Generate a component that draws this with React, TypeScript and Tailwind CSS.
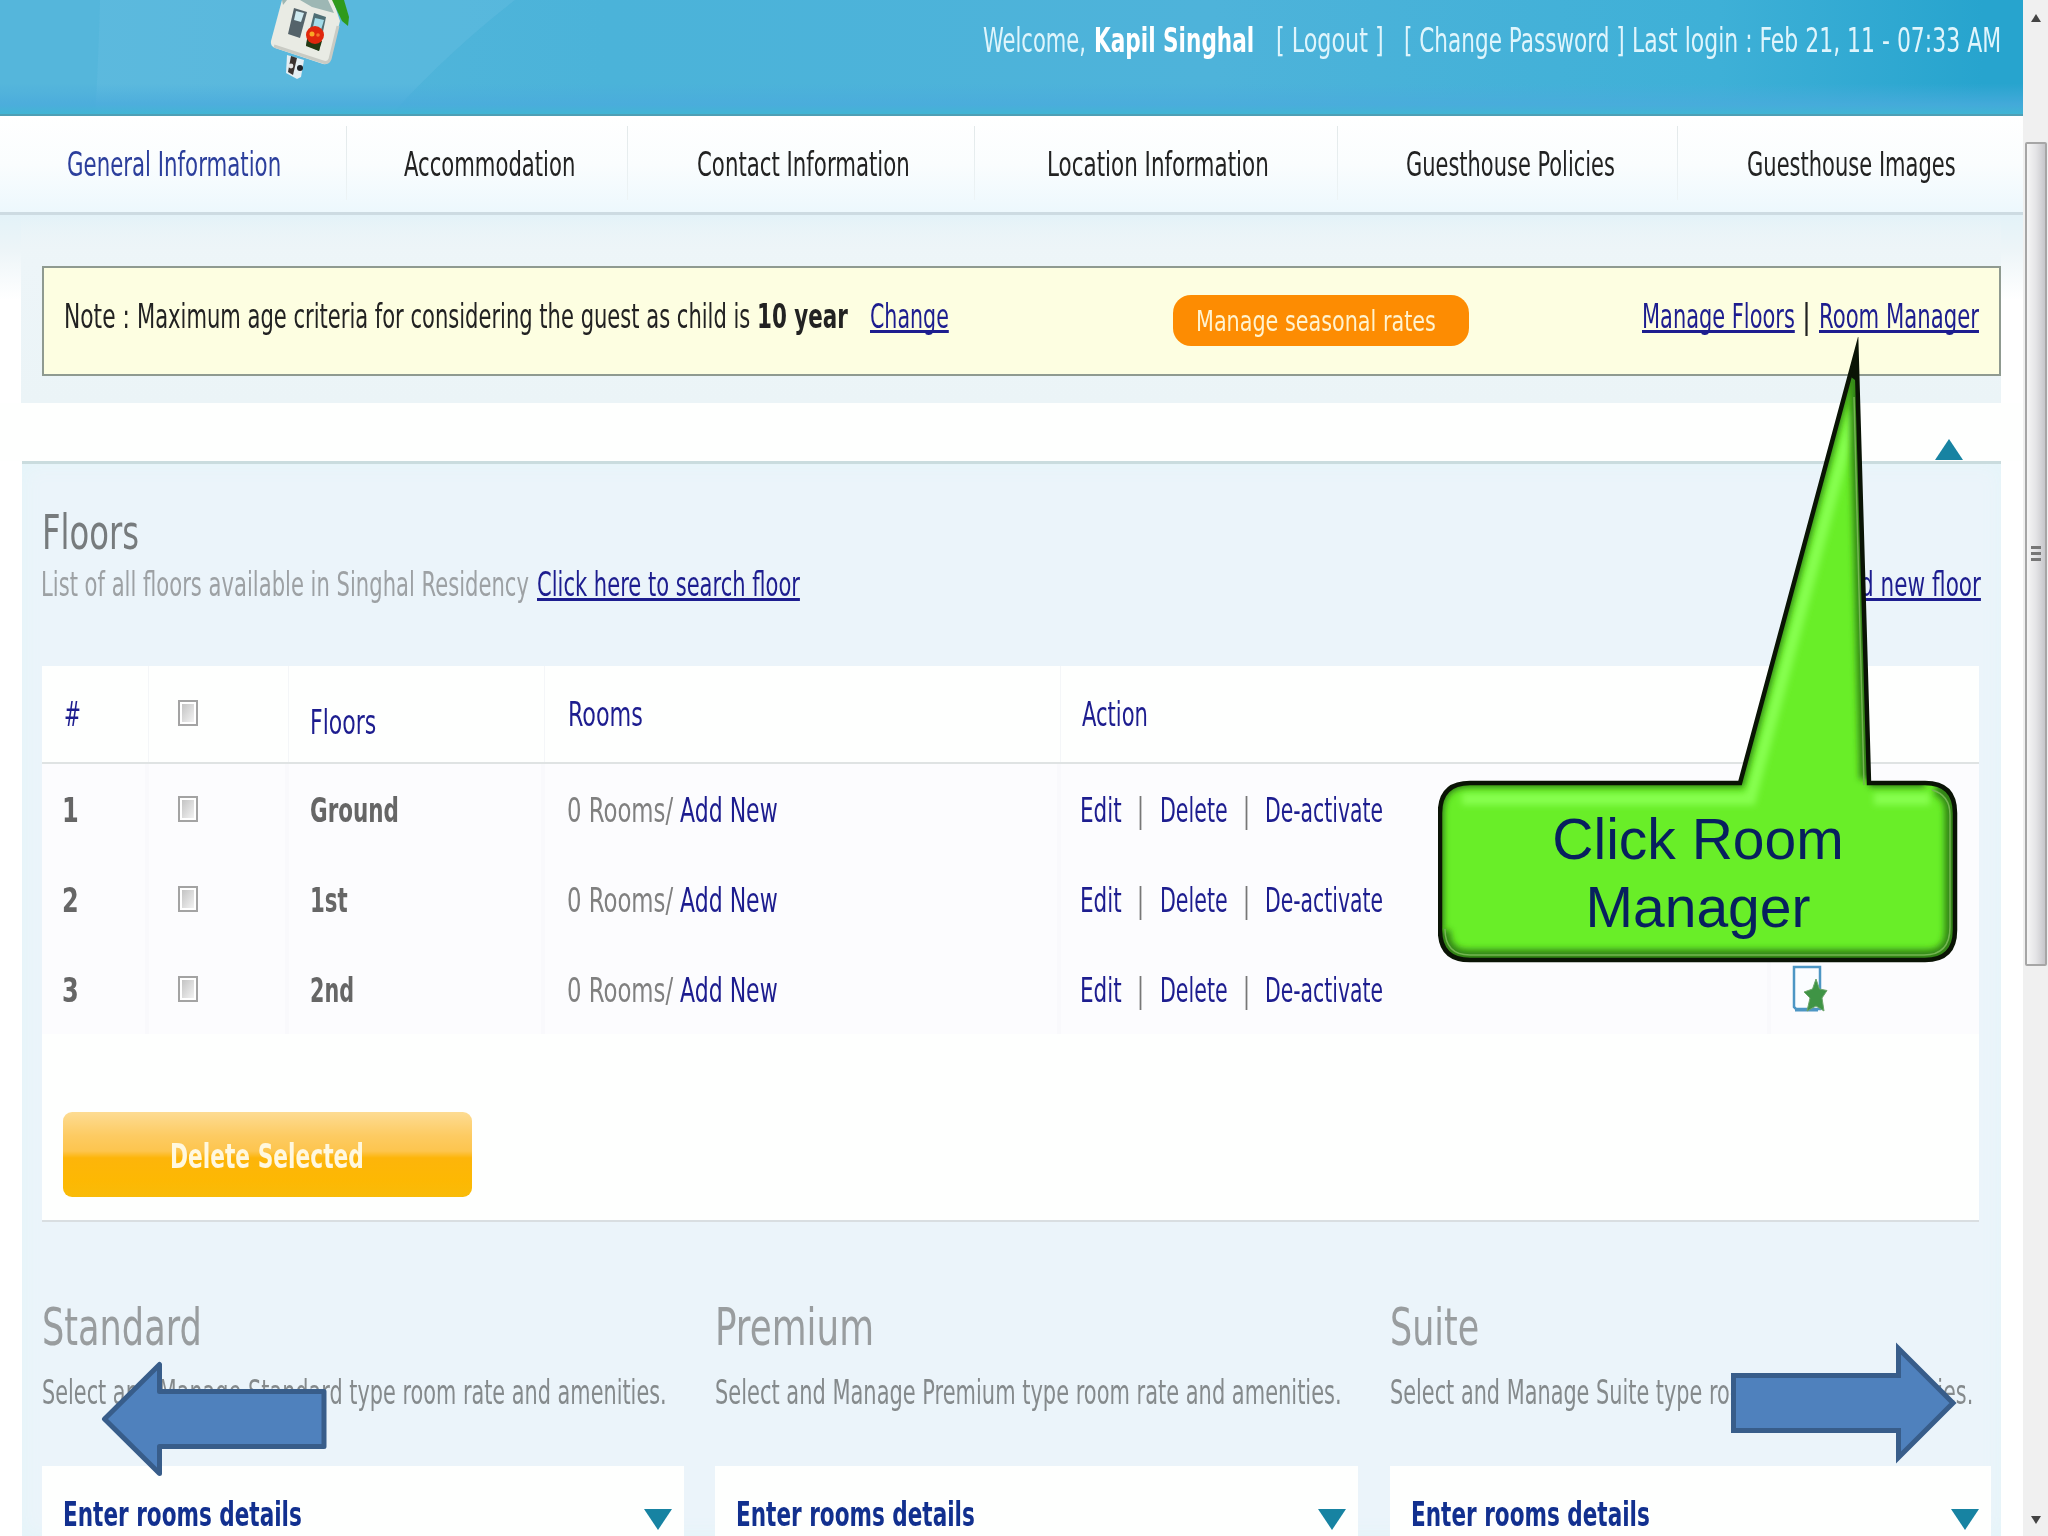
import { useLayoutEffect, useRef, useState, type ReactNode } from 'react';
import clsx from 'clsx';

interface FitTextProps {
  width: number;
  children: ReactNode;
  className?: string;
}

// Squeezes a single line of text horizontally so that it fills exactly `width` pixels
function FitText({ width, children, className }: FitTextProps) {
  const ref = useRef<HTMLSpanElement>(null);
  const [scale, setScale] = useState(1);

  useLayoutEffect(() => {
    if (ref.current && ref.current.offsetWidth > 0) {
      setScale(width / ref.current.offsetWidth);
    }
  }, [width]);

  return (
    <span className={clsx('block shrink-0', className)} style={{ width }}>
      <span
        ref={ref}
        className="inline-block origin-left whitespace-pre align-top"
        style={{ transform: `scaleX(${scale})` }}
      >
        {children}
      </span>
    </span>
  );
}

const linkClasses =
  'text-[#1d1d8f] [&>span]:underline [&>span]:decoration-[2.5px] [&>span]:underline-offset-[2px] [&>span]:[text-decoration-skip-ink:none]';

function Logo() {
  return (
    <svg width="90" height="84" viewBox="0 0 90 84" className="ml-[262px] shrink-0">
      <path d="M20 0 L9 41 Q8 46 13 48 L61 64 Q66 65 68 60 L78 21 L71 0 Z" fill="#e9ebe4" />
      <path d="M12 46 L61 62 Q66 64 68 59 L76 26" fill="none" stroke="#c9cbc4" strokeWidth="3" />
      <path d="M20 0 L25 0 L21 5 Z M38 0 L66 0 L72 13 L50 7 Z" fill="#9db7b4" />
      <path d="M70 0 L82 0 L87 17 L86 26 L80 21 Z" fill="#2f9a1c" />
      <path d="M32 8 L45 12 L38 38 L26 34 Z" fill="#55636a" />
      <path d="M34 11 L42 13 L39 22 L32 20 Z" fill="#cfeaf0" />
      <path d="M52 13 L64 17 L57 51 L44 45 Z" fill="#4f6f75" />
      <path d="M53 18 L62 20 L59 30 L51 27 Z" fill="#a3dbe8" />
      <path d="M45 39 L60 41 L57 51 L44 46 Z" fill="#233a13" />
      <ellipse cx="53" cy="35" rx="9" ry="9" fill="#e0270d" />
      <circle cx="50" cy="34" r="2.5" fill="#f9a825" />
      <circle cx="56" cy="35" r="1.8" fill="#f4772a" />
      <path d="M25 55 L42 60 L39 77 L35 79 L24 73 Z" fill="#e4eef3" />
      <path d="M29 56 L35 58 L31 75 L26 72 Z" fill="#3b3331" />
      <circle cx="38" cy="68" r="3" fill="#20242a" />
      <circle cx="29" cy="66" r="2.4" fill="#e5e5e5" />
    </svg>
  );
}

function Header() {
  return (
    <header className="relative flex h-[116px] items-start overflow-hidden border-b-2 border-[#4f9fb5] bg-[linear-gradient(90deg,#58b7dc_0%,#4bb3d9_30%,#4eb3da_60%,#3eb0d7_85%,#27a4ce_98%)]">
      <svg className="absolute inset-0" width="2023" height="116">
        <defs>
          <linearGradient id="base" x1="0" x2="0" y1="0" y2="1">
            <stop offset="0.72" stopColor="#4aabdc" stopOpacity="0" />
            <stop offset="0.9" stopColor="#4aabdc" stopOpacity="0.8" />
            <stop offset="1" stopColor="#3fb8d2" />
          </linearGradient>
        </defs>
        <path d="M0 0 H515 Q450 50 390 116 H0 Z" fill="#62bcdf" opacity="0.5" />
        <path d="M0 0 H100 Q98 70 95 116 H0 Z" fill="#49b1d8" opacity="0.35" />
        <rect width="2023" height="116" fill="url(#base)" />
      </svg>
      <div className="relative flex w-full items-start">
        <Logo />
        <div className="ml-auto flex pt-[21px] pr-[22px] text-[#dff5fc]">
          <FitText width={103}>Welcome,</FitText>
          <FitText width={160} className="ml-2 font-bold text-white">
            Kapil Singhal
          </FitText>
          <FitText width={108} className="ml-[22px]">
            [ Logout ]
          </FitText>
          <FitText width={221} className="ml-5">
            [ Change Password ]
          </FitText>
          <FitText width={369} className="ml-[7px]">
            Last login : Feb 21, 11 - 07:33 AM
          </FitText>
        </div>
      </div>
    </header>
  );
}

const tabs = [
  { label: 'General Information', width: 214, cell: 'w-[347px] pl-[67px] text-[#2c3f9c]' },
  { label: 'Accommodation', width: 171, cell: 'w-[281px] pl-[57px]' },
  { label: 'Contact Information', width: 213, cell: 'w-[347px] pl-[69px]' },
  { label: 'Location Information', width: 222, cell: 'w-[363px] pl-[72px]' },
  { label: 'Guesthouse Policies', width: 209, cell: 'w-[340px] pl-[68px]' },
  { label: 'Guesthouse Images', width: 209, cell: 'w-[345px] pl-[69px]' },
];

function NavTabs() {
  return (
    <nav className="flex h-[99px] border-b-3 border-[#cddbe2] bg-linear-to-b from-white via-[#fafdfe] to-[#edf8fd] text-[#222]">
      {tabs.map((tab, index) => (
        <div key={tab.label} className={clsx('flex justify-between pt-[29px]', tab.cell)}>
          <FitText width={tab.width}>{tab.label}</FitText>
          {index < tabs.length - 1 && (
            <span className="-mt-[19px] h-[74px] w-px bg-linear-to-b from-[#e3e9ea] to-[#edf4f6]" />
          )}
        </div>
      ))}
    </nav>
  );
}

function NoteBar() {
  return (
    <section className="h-[188px] bg-[linear-gradient(180deg,#e3f2f8_0px,#edf5f8_35px,#ffffff_85px)] pl-[21px]">
      <div className="h-[188px] w-[1980px] bg-[linear-gradient(180deg,#e6f3f900_0px,#edf5f8_45px,#ebf4f7_188px)] pt-[51px] pl-[21px]">
        <div className="flex h-[110px] w-[1959px] border-2 border-[#8f9a90] bg-[#fdfee1] text-[#222]">
          <FitText width={66} className="mt-[29px] ml-5">
            Note :
          </FitText>
          <FitText width={613} className="mt-[29px] ml-[7px]">
            Maximum age criteria for considering the guest as child is
          </FitText>
          <FitText width={91} className="mt-[29px] ml-[7px] font-bold">
            10 year
          </FitText>
          <FitText width={79} className={clsx('mt-[29px] ml-[22px]', linkClasses)}>
            Change
          </FitText>
          <button
            type="button"
            className="mt-[27px] ml-[224px] flex h-[51px] w-[296px] rounded-[18px] bg-[#fd8c02] pt-[6px] pl-[23px] text-[29px] text-[#fff3cf]"
          >
            <FitText width={240}>Manage seasonal rates</FitText>
          </button>
          <FitText width={153} className={clsx('mt-[29px] ml-[173px]', linkClasses)}>
            Manage Floors
          </FitText>
          <FitText width={9} className="mt-[29px] ml-[7px]">
            |
          </FitText>
          <FitText width={160} className={clsx('mt-[29px] ml-2', linkClasses)}>
            Room Manager
          </FitText>
        </div>
      </div>
    </section>
  );
}

function Checkbox() {
  return (
    <span className="block h-[26px] w-5 border-2 border-[#a3a3a3] bg-white p-0.5">
      <span className="block size-full bg-linear-to-br from-[#c4c4c4] to-[#f3f3f3]" />
    </span>
  );
}

function StarPageIcon() {
  return (
    <svg width="40" height="54" viewBox="0 0 40 54">
      <path d="M3 4 H29 V46 H5 L3 44 Z" fill="#fbfdff" stroke="#4d96c4" strokeWidth="2.5" />
      <path d="M4 47 H27" stroke="#4d96c4" strokeWidth="3" />
      <path
        d="M25 16 L28.5 26 L36 27.5 L31 35 L33 48 L25 43 L16 48 L19 35 L13 29 L21.5 26 Z"
        fill="#3f9445"
        stroke="#6da56b"
        strokeWidth="1"
      />
    </svg>
  );
}

const tableGrid = 'grid grid-cols-[107px_140px_256px_516px_710px_208px]';

const floors = [
  { name: 'Ground', width: 89 },
  { name: '1st', width: 38 },
  { name: '2nd', width: 44 },
];

function FloorsTable() {
  return (
    <div className="mt-[61px] ml-5 h-[556px] w-[1937px] border-b-2 border-[#d9dee1] bg-[#fefffe]">
      <div
        className={clsx(
          tableGrid,
          'h-[98px] border-b-2 border-[#dfe3e3] text-[#1d1d8f] *:border-r *:border-[#f4f6f8] *:last:border-r-0',
        )}
      >
        <div className="pt-[29px] pl-[22px]">
          <FitText width={17}>#</FitText>
        </div>
        <div className="pt-[34px] pl-[29px]">
          <Checkbox />
        </div>
        <div className="pt-[37px] pl-[21px]">
          <FitText width={66}>Floors</FitText>
        </div>
        <div className="pt-[29px] pl-[23px]">
          <FitText width={75}>Rooms</FitText>
        </div>
        <div className="pt-[29px] pl-[21px]">
          <FitText width={66}>Action</FitText>
        </div>
        <div />
      </div>

      {floors.map((floor, index) => (
        <div
          key={floor.name}
          className={clsx(
            tableGrid,
            'h-[90px] bg-[#fcfcfe] pt-[27px]',
            '*:-mt-[27px] *:h-[90px] *:border-r-4 *:border-[#f9f9fc] *:pt-[27px] *:last:border-r-0',
          )}
        >
          <div className="pl-5 font-bold text-[#666]">
            <FitText width={17}>{index + 1}</FitText>
          </div>
          <div className="pl-[29px]">
            <div className="pt-[5px]">
              <Checkbox />
            </div>
          </div>
          <div className="pl-[21px] font-bold text-[#666]">
            <FitText width={floor.width}>{floor.name}</FitText>
          </div>
          <div className="flex gap-[7px] pl-[22px]">
            <FitText width={106} className="text-[#808080]">
              0 Rooms/
            </FitText>
            <FitText width={98} className="text-[#1d1d8f]">
              Add New
            </FitText>
          </div>
          <div className="flex pl-[19px] text-[#1d1d8f]">
            <FitText width={42}>Edit</FitText>
            <FitText width={7} className="ml-[15px] text-[#777]">
              |
            </FitText>
            <FitText width={68} className="ml-4">
              Delete
            </FitText>
            <FitText width={7} className="ml-[15px] text-[#777]">
              |
            </FitText>
            <FitText width={118} className="ml-[15px]">
              De-activate
            </FitText>
          </div>
          <div className="pl-5">
            <div className="-mt-2">
              <StarPageIcon />
            </div>
          </div>
        </div>
      ))}

      <div className="h-[186px] bg-[#fefffe] pt-[78px] pl-[21px]">
        <button
          type="button"
          className="flex h-[85px] w-[409px] rounded-[9px] bg-[linear-gradient(180deg,#fddc93_0%,#fdcb62_28%,#fdc54e_46%,#fdb50a_54%,#fdb803_80%,#f9bb08_100%)] pt-[25px] pl-[107px] font-bold text-[#fff8df]"
        >
          <FitText width={194}>Delete Selected</FitText>
        </button>
      </div>
    </div>
  );
}

const categories = [
  { name: 'Standard', nameWidth: 160, descWidth: 625, card: 'w-[642px]' },
  { name: 'Premium', nameWidth: 159, descWidth: 627, card: 'w-[643px]' },
  { name: 'Suite', nameWidth: 89, descWidth: 583, card: 'w-[601px]' },
];

function RoomCategories() {
  return (
    <div className="ml-5 grid grid-cols-[673px_675px_601px] pt-[76px]">
      {categories.map((category) => (
        <div key={category.name}>
          <h2 className="text-[51px] leading-[60px] text-[#999d9f]">
            <FitText width={category.nameWidth}>{category.name}</FitText>
          </h2>
          <p className="mt-[15px] text-[#858a8c]">
            <FitText width={category.descWidth}>
              {`Select and Manage ${category.name} type room rate and amenities.`}
            </FitText>
          </p>
          <div
            className={clsx(
              'mt-[53px] flex h-20 justify-between bg-[#fefffe] pt-[29px] pr-3 pl-[21px]',
              category.card,
            )}
          >
            <FitText width={239} className="font-bold text-[#12308f]">
              Enter rooms details
            </FitText>
            <svg width="28" height="21" className="mt-[14px]">
              <path d="M0 0 H28 L14 21 Z" fill="#1783a2" />
            </svg>
          </div>
        </div>
      ))}
    </div>
  );
}

function Scrollbar() {
  return (
    <aside className="flex h-[1536px] w-[25px] flex-col items-center bg-[#f0f0f0]">
      <svg width="12" height="8" className="mt-3.5 shrink-0">
        <path d="M6 0 L11 8 H1 Z" fill="#444" />
      </svg>
      <div className="mt-[120px] flex h-[824px] w-[22px] shrink-0 flex-col items-center gap-[3px] rounded-xs border-2 border-[#a6a6a6] bg-linear-to-r from-[#f6f6f6] via-[#e4e4e6] to-[#c6c6ca] pt-[402px]">
        <span className="h-[3px] w-2.5 bg-[#777]" />
        <span className="h-[3px] w-2.5 bg-[#777]" />
        <span className="h-[3px] w-2.5 bg-[#777]" />
      </div>
      <svg width="12" height="8" className="mt-[550px] shrink-0">
        <path d="M6 8 L11 0 H1 Z" fill="#444" />
      </svg>
    </aside>
  );
}

const calloutPath =
  'M32 446 H302 L418.5 14 L431 446 H487 Q517 446 517 476 V593 Q517 623 487 623 H32 Q2 623 2 593 V476 Q2 446 32 446 Z';

function Callout() {
  return (
    <div className="absolute top-[337px] left-[1438px] h-[628px] w-[520px]">
      <svg width="520" height="628" className="absolute inset-0">
        <defs>
          <clipPath id="callout-clip">
            <path d={calloutPath} />
          </clipPath>
          <filter id="soft" x="-10%" y="-10%" width="120%" height="120%">
            <feGaussianBlur stdDeviation="3" />
          </filter>
        </defs>
        <path d={calloutPath} fill="#69ee28" />
        <g clipPath="url(#callout-clip)">
          <path
            d="M24 462 H312 L416 75 M436 462 H492"
            fill="none"
            stroke="#86ff50"
            strokeWidth="12"
            filter="url(#soft)"
          />
          <path
            d="M2 593 V476 Q2 446 32 446 H302 L418 14 M431 446 H487"
            fill="none"
            stroke="#2f7d14"
            strokeWidth="8"
            filter="url(#soft)"
          />
          <path
            d="M419 16 L430 442 M498 450 Q515 454 515 476 V593 Q515 621 487 621 H32 Q4 621 4 593"
            fill="none"
            stroke="#328416"
            strokeWidth="17"
            filter="url(#soft)"
          />
          <path
            d="M416 60 L426 448 M494 453 Q512 458 512 478 V590 Q512 618 486 618 H32 Q7 618 7 592"
            fill="none"
            stroke="#74b552"
            strokeWidth="1.5"
          />
        </g>
        <path
          d={calloutPath}
          fill="none"
          stroke="#0a1405"
          strokeWidth="4.5"
          strokeMiterlimit="20"
        />
        <path d="M413 40 L418.5 14 L421 46 Z" fill="#0a1405" />
      </svg>
      <div className="relative pt-[468px] text-center font-['Liberation_Sans',Arial,sans-serif] text-[57px] leading-[68px] text-[#07205e]">
        Click Room
        <br />
        Manager
      </div>
    </div>
  );
}

function SlideArrows() {
  return (
    <>
      <svg className="absolute top-[1356px] left-[98px]" width="236" height="126">
        <path
          d="M6.5 63 L61.5 8.5 V35.5 H226 V90.5 H61.5 V117.5 Z"
          fill="#4f81bd"
          stroke="#385d8a"
          strokeWidth="5"
          strokeLinejoin="round"
        />
      </svg>
      <svg className="absolute top-[1336px] left-[1725px]" width="240" height="134">
        <path
          d="M8.5 39.5 H173.5 V12.5 L228 67 L173.5 121.5 V94.5 H8.5 Z"
          fill="#4f81bd"
          stroke="#385d8a"
          strokeWidth="5"
        />
      </svg>
    </>
  );
}

export default function App() {
  return (
    <div className="relative flex h-[1536px] w-[2048px] overflow-hidden bg-white font-['DejaVu_Sans_Condensed','DejaVu_Sans',sans-serif] text-[33px] leading-10">
      <div className="h-[1536px] w-[2023px] overflow-hidden">
        <Header />
        <NavTabs />
        <NoteBar />
        <div className="flex h-[58px] items-end justify-end bg-[#fefffe] pr-[60px] pb-px">
          <svg width="28" height="21">
            <path d="M14 0 L28 21 H0 Z" fill="#1783a2" />
          </svg>
        </div>
        <main className="ml-[22px] h-[1075px] w-[1979px] border-t-3 border-[#cadcde] bg-[#ebf4fa] shadow-[inset_0_0_20px_#e3f5f9]">
          <h1 className="pt-10 pl-[20px] text-[48px] leading-[56px] text-[#777b7d]">
            <FitText width={97}>Floors</FitText>
          </h1>
          <div className="mt-[5px] flex pr-5 pl-[19px] text-[#9da1a4]">
            <FitText width={488}>List of all floors available in Singhal Residency</FitText>
            <FitText width={263} className={clsx('ml-2', linkClasses)}>
              Click here to search floor
            </FitText>
            <FitText width={149} className={clsx('ml-auto', linkClasses)}>
              Add new floor
            </FitText>
          </div>
          <FloorsTable />
          <RoomCategories />
        </main>
      </div>
      <Scrollbar />
      <Callout />
      <SlideArrows />
    </div>
  );
}
